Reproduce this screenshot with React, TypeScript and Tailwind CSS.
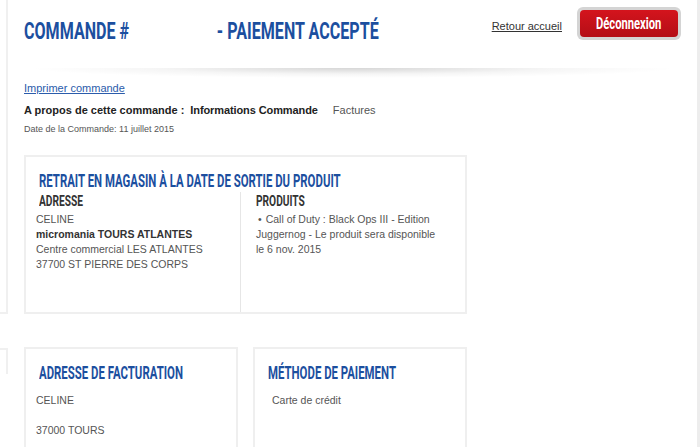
import React from "react";

const cond = "font-['Roboto',sans-serif] font-bold";

export default function App() {
  return (
    <div className="w-[700px] h-[447px] bg-white flex overflow-hidden font-['Liberation_Sans',Arial,sans-serif]">
      {/* left clipped sidebar */}
      <div className="w-[8px] shrink-0">
        <div className="h-[314px] border-r-2 border-b-2 border-[#f0f0f0]" />
        <div className="h-[34px]" />
        <div className="h-[26px] border-r-2 border-t-2 border-[#f0f0f0]" />
      </div>

      <div className="flex-1 min-w-0">
        {/* header */}
        <div className="h-[68px] flex items-start pl-[16px] pr-[16px]">
          <div className="flex-1 min-w-0 pt-[19px]">
            <div className={`${cond} text-[24px] leading-[24px] text-[#1c4f9f] whitespace-nowrap origin-left scale-x-[0.67]`}>
              COMMANDE #<span className="inline-block w-[131px]" />- PAIEMENT ACCEPTÉ
            </div>
          </div>
          <a className="text-[11px] text-[#333] underline mt-[18px] mr-[15px] whitespace-nowrap">Retour accueil</a>
          <div className="mt-[7px] rounded-[6px] bg-[#d4d4d4] p-[3px] shrink-0">
            <div className="w-[98px] h-[27px] rounded-[4px] bg-gradient-to-b from-[#d4141d] to-[#b40e16] flex items-center justify-center">
              <span className={`${cond} text-white text-[16px] leading-none scale-x-[0.7] inline-block whitespace-nowrap`}>Déconnexion</span>
            </div>
          </div>
        </div>
        <div className="h-[10px] mx-[20px] bg-[radial-gradient(ellipse_50%_100%_at_50%_0%,rgba(0,0,0,0.16),rgba(0,0,0,0.04)_60%,transparent_100%)]" />

        {/* content */}
        <div className="pl-[16px]">
          <a className="block text-[11px] leading-[14px] text-[#2b5cab] underline mt-[3px]">Imprimer commande</a>
          <div className="flex text-[11px] leading-[14px] mt-[8px] text-[#222]">
            <span className="font-bold">A propos de cette commande :</span>
            <span className="font-bold ml-[6px] tracking-[-0.1px]">Informations Commande</span>
            <span className="ml-[15px] text-[#555]">Factures</span>
          </div>
          <div className="text-[9px] leading-[12px] text-[#555] mt-[6px]">Date de la Commande: 11 juillet 2015</div>

          {/* box 1 */}
          <div className="w-[443px] h-[159px] mt-[20px] border-2 border-[#efefef] flex flex-col">
            <div className={`${cond} text-[19px] leading-[20px] text-[#1c4f9f] ml-[13px] mt-[14px] whitespace-nowrap origin-left scale-x-[0.6]`}>
              RETRAIT EN MAGASIN À LA DATE DE SORTIE DU PRODUIT
            </div>
            <div className="flex flex-1 mt-[1px]">
              <div className="w-[215px] border-r border-[#e6e6e6] pl-[10px] text-[10.5px] leading-[15px] text-[#555]">
                <div className={`${cond} text-[15px] leading-[18px] text-[#333] ml-[3px] whitespace-nowrap origin-left scale-x-[0.68]`}>ADRESSE</div>
                <div className="mt-[2px]">CELINE</div>
                <div className="font-bold text-[#333]">micromania TOURS ATLANTES</div>
                <div>Centre commercial LES ATLANTES</div>
                <div>37700 ST PIERRE DES CORPS</div>
              </div>
              <div className="flex-1 pl-[15px] pr-[20px] text-[10.5px] leading-[15px] text-[#555]">
                <div className={`${cond} text-[15px] leading-[18px] text-[#333] whitespace-nowrap origin-left scale-x-[0.68]`}>PRODUITS</div>
                <div className="mt-[2px]">
                  <span className="ml-[2px] mr-[4px]">•</span>Call of Duty : Black Ops III - Edition Juggernog - Le produit sera disponible le 6 nov. 2015
                </div>
              </div>
            </div>
          </div>

          {/* boxes 2 & 3 */}
          <div className="flex gap-[15px] mt-[33px]">
            <div className="w-[214px] h-[120px] border-2 border-[#efefef] pt-[14px] text-[10.5px] leading-[15px] text-[#555]">
              <div className={`${cond} text-[19px] leading-[20px] text-[#1c4f9f] ml-[13px] whitespace-nowrap origin-left scale-x-[0.6]`}>ADRESSE DE FACTURATION</div>
              <div className="pl-[10px] mt-[10px]">CELINE</div>
              <div className="pl-[10px] mt-[15px]">37000 TOURS</div>
            </div>
            <div className="w-[214px] h-[120px] border-2 border-[#efefef] pt-[14px] text-[10.5px] leading-[15px] text-[#555]">
              <div className={`${cond} text-[19px] leading-[20px] text-[#1c4f9f] ml-[13px] whitespace-nowrap origin-left scale-x-[0.6]`}>MÉTHODE DE PAIEMENT</div>
              <div className="pl-[17px] mt-[10px]">Carte de crédit</div>
            </div>
          </div>
        </div>
      </div>

      {/* right strip */}
      <div className="w-[3px] shrink-0 bg-[#ededed]" />
    </div>
  );
}
